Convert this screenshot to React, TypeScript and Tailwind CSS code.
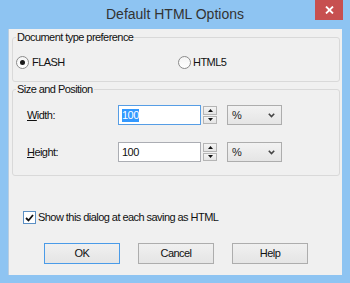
import React from 'react';

function Radio({ checked }: { checked?: boolean }) {
  return (
    <span className="w-[13px] h-[13px] rounded-full border border-[#8b8b8b] bg-gradient-to-b from-[#f4f4f4] to-white flex items-center justify-center shrink-0">
      {checked && <span className="w-[5px] h-[5px] rounded-full bg-[#1a1a1a]" />}
    </span>
  );
}

function Spinner() {
  return (
    <div className="ml-[2px] w-[14px] h-[20px] flex flex-col gap-[1px] py-[1px]">
      <div className="flex-1 border border-[#b5b5b5] bg-gradient-to-b from-[#f4f4f4] to-[#e4e4e4] flex items-center justify-center">
        <svg width="5" height="3" viewBox="0 0 5 3"><path d="M2.5 0 L5 3 L0 3 Z" fill="#111" /></svg>
      </div>
      <div className="flex-1 border border-[#b5b5b5] bg-gradient-to-b from-[#f4f4f4] to-[#e4e4e4] flex items-center justify-center">
        <svg width="5" height="3" viewBox="0 0 5 3"><path d="M0 0 L5 0 L2.5 3 Z" fill="#111" /></svg>
      </div>
    </div>
  );
}

function Unit() {
  return (
    <div className="ml-[10px] w-[55px] h-[20px] border border-[#adadad] bg-gradient-to-b from-[#f2f2f2] to-[#e5e5e5] flex items-center pl-[4px] pr-[6px]">
      <span className="flex-1 text-[11px] text-[#222]">%</span>
      <svg width="7" height="5" viewBox="0 0 7 5"><path d="M0.8 0.8 L3.5 3.6 L6.2 0.8" fill="none" stroke="#444" strokeWidth="1.6" /></svg>
    </div>
  );
}

function Button({ label, primary }: { label: string; primary?: boolean }) {
  return (
    <button
      className={
        'w-[76px] h-[21px] bg-gradient-to-b from-[#f0f0f0] to-[#e5e5e5] text-[11px] text-[#111] ' +
        (primary ? 'border border-[#4a9be8]' : 'border border-[#adadad]')
      }
    >
      {label}
    </button>
  );
}

export default function App() {
  return (
    <div className="w-[350px] h-[283px] bg-[#8ec4f2] flex flex-col font-['Liberation_Sans',Arial,sans-serif] text-[11px] tracking-[-0.55px] text-[#111]">
      <div className="h-[29px] grid grid-cols-[35px_1fr_35px]">
        <div />
        <div className="flex items-center justify-center pb-[1px] text-[14px] tracking-normal text-[#333]">
          Default HTML Options
        </div>
        <div className="flex items-start">
          <div className="w-[28px] h-[20px] bg-[#c75050] flex items-center justify-center">
            <svg width="9" height="8" viewBox="0 0 9 8"><path d="M1 0.5 L8 7.5 M8 0.5 L1 7.5" stroke="#fff" strokeWidth="1.8" /></svg>
          </div>
        </div>
      </div>

      <div className="mx-[8px] h-[246px] bg-[#f0f0f0] border-l border-[#b9cde0] flex flex-col pl-[3px] pr-[2px]">
        <fieldset className="mt-[1px] h-[52px] border border-[#d9d9d9] rounded-[3px] p-0 m-0 min-w-0">
          <legend className="ml-[3px] px-[1px] leading-[14px]">Document type preference</legend>
          <div className="mt-[11px] h-[14px] flex items-center">
            <label className="ml-[3px] w-[162px] flex items-center gap-[3px]">
              <Radio checked />
              <span>FLASH</span>
            </label>
            <label className="flex items-center gap-[2px]">
              <Radio />
              <span>HTML5</span>
            </label>
          </div>
        </fieldset>

        <fieldset className="h-[94px] border border-[#d9d9d9] rounded-[3px] p-0 m-0 min-w-0">
          <legend className="ml-[3px] px-[1px] leading-[14px]">Size and Position</legend>
          <div className="mt-[9px] h-[20px] flex items-center">
            <span className="ml-[14px] w-[91px]"><u>W</u>idth:</span>
            <div className="w-[83px] h-[20px] border border-[#569de5] bg-white flex items-center pl-[3px]">
              <span className="bg-[#3399ff] text-white leading-[13px]">100</span>
            </div>
            <Spinner />
            <Unit />
          </div>
          <div className="mt-[17px] h-[20px] flex items-center">
            <span className="ml-[14px] w-[91px]"><u>H</u>eight:</span>
            <div className="w-[83px] h-[20px] border border-[#abadb3] bg-white flex items-center pl-[3px]">
              <span className="leading-[13px]">100</span>
            </div>
            <Spinner />
            <Unit />
          </div>
        </fieldset>

        <label className="mt-[35px] h-[13px] flex items-center ml-[11px] gap-[2px]">
          <span className="w-[13px] h-[13px] border border-[#5b8fc4] bg-white flex items-center justify-center">
            <svg width="9" height="8" viewBox="0 0 9 8"><path d="M1 4 L3.5 6.5 L8 1" fill="none" stroke="#111" strokeWidth="1.8" /></svg>
          </span>
          <span>Show this dialog at each saving as HTML</span>
        </label>

        <div className="mt-[19px] flex justify-center gap-[18px]">
          <Button label="OK" primary />
          <Button label="Cancel" />
          <Button label="Help" />
        </div>
      </div>
    </div>
  );
}
